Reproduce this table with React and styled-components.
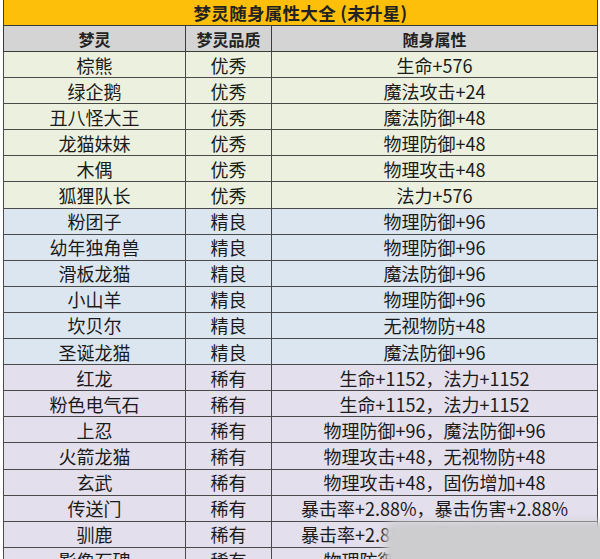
import React from 'react'
import styled, {createGlobalStyle} from 'styled-components'

const GlobalStyle = createGlobalStyle`
  html, body {
    margin: 0;
    padding: 0;
    background: #ffffff;
    overflow: hidden;
  }
  body {
    font-family: "Noto Sans CJK SC", "Noto Sans", sans-serif;
  }
`

const tones = {
  green: '#ebf1de',
  blue: '#dce6f1',
  purple: '#e4dfec'
}

const rows = [
  ['棕熊', '优秀', '生命+576', 'green'],
  ['绿企鹅', '优秀', '魔法攻击+24', 'green'],
  ['丑八怪大王', '优秀', '魔法防御+48', 'green'],
  ['龙猫妹妹', '优秀', '物理防御+48', 'green'],
  ['木偶', '优秀', '物理攻击+48', 'green'],
  ['狐狸队长', '优秀', '法力+576', 'green'],
  ['粉团子', '精良', '物理防御+96', 'blue'],
  ['幼年独角兽', '精良', '物理防御+96', 'blue'],
  ['滑板龙猫', '精良', '魔法防御+96', 'blue'],
  ['小山羊', '精良', '物理防御+96', 'blue'],
  ['坎贝尔', '精良', '无视物防+48', 'blue'],
  ['圣诞龙猫', '精良', '魔法防御+96', 'blue'],
  ['红龙', '稀有', '生命+1152，法力+1152', 'purple'],
  ['粉色电气石', '稀有', '生命+1152，法力+1152', 'purple'],
  ['上忍', '稀有', '物理防御+96，魔法防御+96', 'purple'],
  ['火箭龙猫', '稀有', '物理攻击+48，无视物防+48', 'purple'],
  ['玄武', '稀有', '物理攻击+48，固伤增加+48', 'purple'],
  ['传送门', '稀有', '暴击率+2.88%，暴击伤害+2.88%', 'purple'],
  ['驯鹿', '稀有', '暴击率+2.88%，暴击伤害+2.88%', 'purple'],
  ['影像石碑', '稀有', '物理防御+96，魔法防御+96', 'purple']
]

class App extends React.Component {
  render() {
    return (
      <Page>
        <GlobalStyle />
        <Sheet>
          <colgroup>
            <col style={{width: 182}} />
            <col style={{width: 86}} />
            <col style={{width: 326}} />
          </colgroup>
          <thead>
            <tr>
              <Title colSpan={3}>梦灵随身属性大全 (未升星)</Title>
            </tr>
            <tr>
              <HeadCell>梦灵</HeadCell>
              <HeadCell>梦灵品质</HeadCell>
              <HeadCell>随身属性</HeadCell>
            </tr>
          </thead>
          <tbody>
            {rows.map(([name, quality, attr, tone]) => (
              <tr key={name}>
                <Cell tone={tone}>{name}</Cell>
                <Cell tone={tone}>{quality}</Cell>
                <Cell tone={tone}>{attr}</Cell>
              </tr>
            ))}
          </tbody>
        </Sheet>
        <Watermark />
      </Page>
    )
  }
}

const Page = styled.div`
  position: relative;
  width: 600px;
  height: 559px;
  overflow: hidden;
  padding-left: 3px;
  box-sizing: border-box;
`

const Sheet = styled.table`
  width: 595px;
  border-collapse: collapse;
  table-layout: fixed;
  color: #1a1a1a;
`

const Title = styled.th`
  height: 25px;
  padding: 0;
  background: #fdbf0a;
  border: 1px solid #3a3a3a;
  border-top: none;
  font-size: 17.5px;
  font-weight: 700;
  line-height: 24px;
  letter-spacing: 0.3px;
  text-align: center;
  color: #222;
`

const HeadCell = styled.th`
  height: 25px;
  padding: 0;
  background: #d4d4d4;
  border: 1px solid #3a3a3a;
  font-size: 16px;
  font-weight: 700;
  line-height: 24px;
  text-align: center;
  color: #222;
`

const Cell = styled.td`
  height: 25.1px;
  padding: 0;
  background: ${props => tones[props.tone]};
  border: 1px solid #4a4a4a;
  font-size: 18px;
  line-height: 24px;
  text-align: center;
  white-space: nowrap;
  overflow: hidden;
`

const Watermark = styled.div`
  position: absolute;
  left: 388px;
  top: 524px;
  width: 240px;
  height: 50px;
  background: #cdcdd0;
  border-radius: 8px;
  box-shadow: 0 0 6px 3px rgba(205, 205, 208, 0.8);
  filter: blur(2px);
`

export default App
